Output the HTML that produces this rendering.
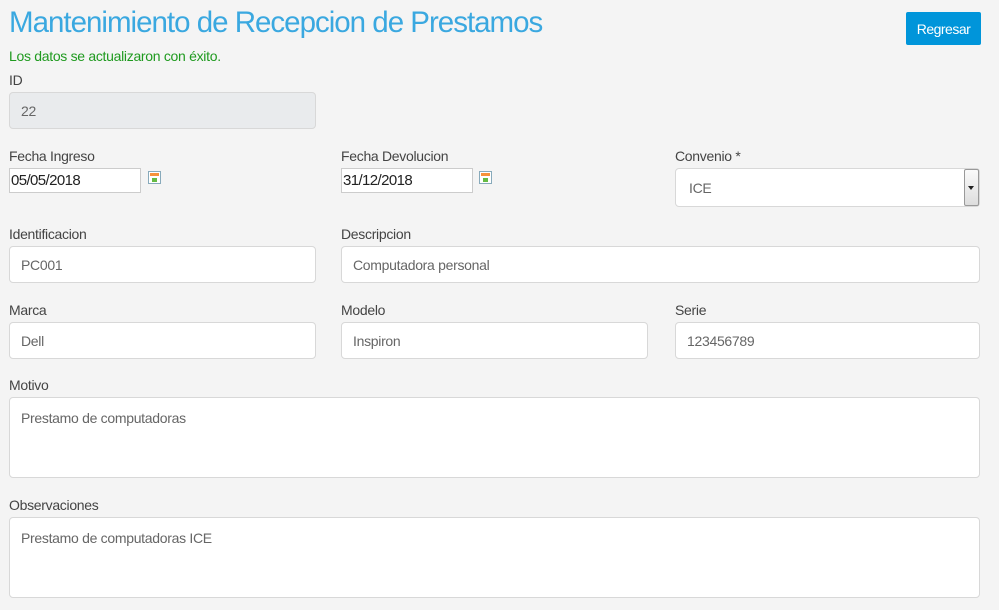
<!DOCTYPE html><html><head><meta charset="utf-8"><style>
*{box-sizing:border-box;margin:0;padding:0}
body{width:999px;height:610px;background:#f4f4f4;font-family:"Liberation Sans",sans-serif;position:relative;overflow:hidden;color:#333}
.a{position:absolute;white-space:nowrap}
.l{font-size:14px;letter-spacing:-0.3px;color:#444}
.i{position:absolute;background:#fff;border:1px solid #d8d8d8;border-radius:4px;font-size:14px;letter-spacing:-0.3px;color:#666;padding-left:11px;display:flex;align-items:center}
.t{align-items:flex-start;padding-top:12px}
.d{position:absolute;background:#fff;border:1px solid #ccc;font-size:15px;letter-spacing:-0.6px;color:#222;padding-left:1px;display:flex;align-items:center;height:25px}
.c{position:absolute;width:13px;height:13px;border:1px solid #8ab;background:#fff}
.c:before{content:"";position:absolute;left:1px;top:1px;width:9px;height:3px;background:#f7923a}
.c:after{content:"";position:absolute;left:3px;top:6px;width:5px;height:4px;background:#6b4}
</style></head><body>
<div class="a" style="left:9px;top:6px;font-size:29.5px;letter-spacing:-1px;color:#3aa8e0">Mantenimiento de Recepcion de Prestamos</div>
<div class="a" style="left:906px;top:12px;width:75px;height:33px;background:#0095da;border-radius:2px;color:#fff;font-size:14px;letter-spacing:-0.5px;display:flex;align-items:center;justify-content:center">Regresar</div>
<div class="a" style="left:9px;top:48px;font-size:14px;letter-spacing:-0.3px;color:#1f9a1f">Los datos se actualizaron con éxito.</div>
<div class="a l" style="left:9px;top:72px">ID</div>
<div class="i" style="left:9px;top:92px;width:307px;height:37px;background:#e9ebed">22</div>
<div class="a l" style="left:9px;top:148px">Fecha Ingreso</div>
<div class="d" style="left:9px;top:168px;width:132px">05/05/2018</div>
<div class="c" style="left:148px;top:171px"></div>
<div class="a l" style="left:341px;top:148px">Fecha Devolucion</div>
<div class="d" style="left:341px;top:168px;width:132px">31/12/2018</div>
<div class="c" style="left:479px;top:171px"></div>
<div class="a l" style="left:675px;top:148px">Convenio *</div>
<div class="i" style="left:675px;top:168px;width:305px;height:39px;padding-left:13px">ICE</div>
<div class="a" style="left:964px;top:169px;width:15px;height:37px;background:linear-gradient(#fafafa,#ddd);border:1px solid #999;border-radius:2px"><div style="position:absolute;left:3px;top:16px;border-left:3px solid transparent;border-right:3px solid transparent;border-top:4px solid #222"></div></div>
<div class="a l" style="left:9px;top:226px">Identificacion</div>
<div class="i" style="left:9px;top:246px;width:307px;height:37px">PC001</div>
<div class="a l" style="left:341px;top:226px">Descripcion</div>
<div class="i" style="left:341px;top:246px;width:639px;height:37px">Computadora personal</div>
<div class="a l" style="left:9px;top:302px">Marca</div>
<div class="i" style="left:9px;top:322px;width:307px;height:37px">Dell</div>
<div class="a l" style="left:341px;top:302px">Modelo</div>
<div class="i" style="left:341px;top:322px;width:307px;height:37px">Inspiron</div>
<div class="a l" style="left:675px;top:302px">Serie</div>
<div class="i" style="left:675px;top:322px;width:305px;height:37px">123456789</div>
<div class="a l" style="left:9px;top:377px">Motivo</div>
<div class="i t" style="left:9px;top:397px;width:971px;height:81px">Prestamo de computadoras</div>
<div class="a l" style="left:9px;top:497px">Observaciones</div>
<div class="i t" style="left:9px;top:517px;width:971px;height:81px">Prestamo de computadoras ICE</div>
</body></html>
